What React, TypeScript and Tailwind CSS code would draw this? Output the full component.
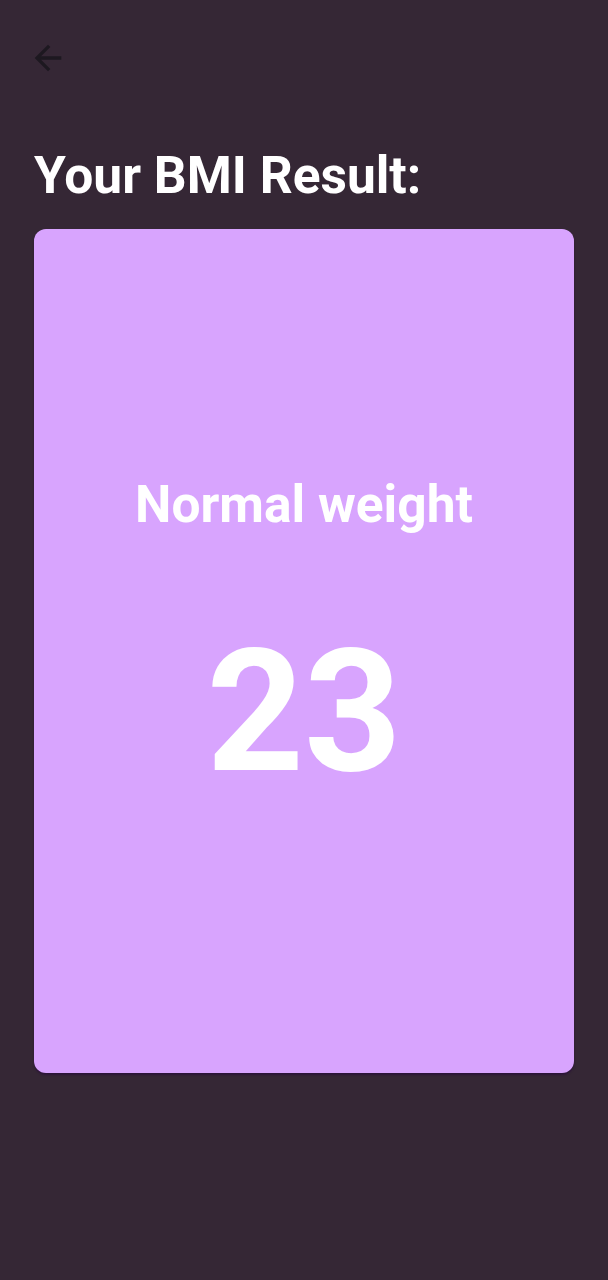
import * as React from 'react'

function BackArrow() {
  return (
    <svg width="40" height="40" viewBox="0 0 24 24" fill="#1d1820">
      <path d="M20 11H7.83l5.59-5.59L12 4l-8 8 8 8 1.41-1.41L7.83 13H20v-2z" />
    </svg>
  )
}

export default function App() {
  const category = 'Normal weight'
  const bmi = 23

  return (
    <div
      className="min-h-[1280px] w-full bg-[#352735] px-[34px]"
      style={{ fontFamily: 'Roboto, "Noto Sans", sans-serif' }}
    >
      {/* app bar */}
      <div className="flex h-[146px] items-start pt-[38px]">
        <button className="-ml-[6px] flex h-10 w-10 items-center justify-center">
          <BackArrow />
        </button>
      </div>

      <h1 className="text-[51.5px] leading-[60px] font-bold text-white">
        Your BMI Result:
      </h1>

      {/* result card */}
      <div className="mt-[23px] flex h-[844px] flex-col items-center rounded-[12px] bg-[#d8a4fe] pt-[246px] shadow-[0_2px_2px_rgba(40,10,60,0.6)]">
        <p className="text-[51.5px] leading-[60px] font-bold text-white">
          {category}
        </p>
        <p className="mt-[92px] text-[170px] leading-[170px] font-bold text-white">
          {bmi}
        </p>
      </div>
    </div>
  )
}
